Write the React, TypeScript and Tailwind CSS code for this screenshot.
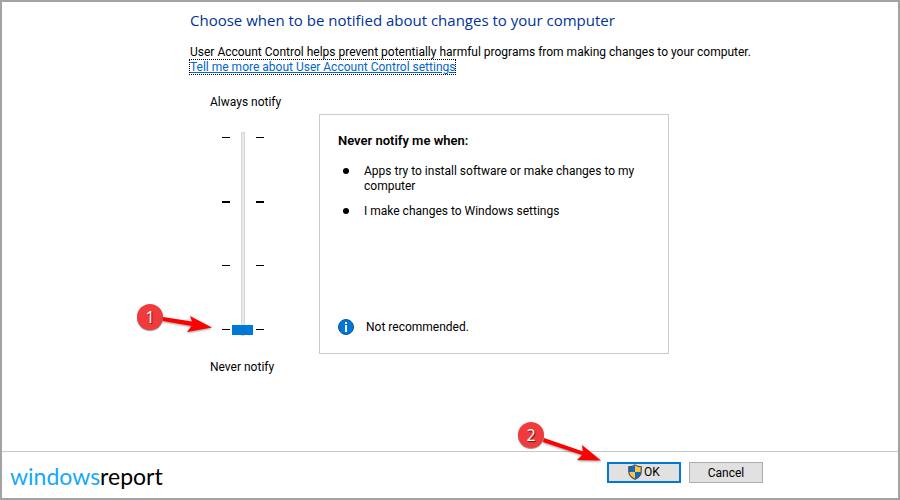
const ticks = [
  { id: "always", thick: false },
  { id: "default", thick: true },
  { id: "no-dim", thick: false },
  { id: "never", thick: false },
];

function TickColumn() {
  return (
    <div className="flex h-[193px] w-2 flex-col justify-between" aria-hidden="true">
      {ticks.map((tick) => (
        <span key={tick.id} className={tick.thick ? "h-0.5 bg-black" : "h-px bg-black"} />
      ))}
    </div>
  );
}

function Badge({ label }: { label: string }) {
  return (
    <span className="flex h-[26px] w-[26px] items-center justify-center rounded-full bg-[#f13a3c] font-['Open_Sans',sans-serif] text-base text-white shadow-[0_1px_1px_rgba(0,0,0,0.45)] [text-shadow:1px_1px_1px_rgba(0,0,0,0.6)]">
      {label}
    </span>
  );
}

function ShieldIcon() {
  return (
    <svg width="14" height="16" viewBox="0 0 14 16" aria-hidden="true">
      <clipPath id="shield">
        <path d="M7 1.2C5.4 2.5 3.2 3 1 3V7.5C1 11 3.2 13.3 7 15C10.8 13.3 13 11 13 7.5V3C10.8 3 8.6 2.5 7 1.2Z" />
      </clipPath>
      <g clipPath="url(#shield)">
        <rect width="7" height="8" fill="#0a6bc9" />
        <rect x="7" width="7" height="8" fill="#ffc33c" />
        <rect y="8" width="7" height="8" fill="#ffc33c" />
        <rect x="7" y="8" width="7" height="8" fill="#0a6bc9" />
      </g>
      <path
        d="M7 0.9C5.4 2.2 3.2 2.8 0.8 2.8V7.5C0.8 11.2 3.2 13.6 7 15.3C10.8 13.6 13.2 11.2 13.2 7.5V2.8C10.8 2.8 8.6 2.2 7 0.9Z"
        fill="none"
        stroke="#4a4a4a"
        strokeWidth="1.2"
      />
    </svg>
  );
}

function InfoIcon() {
  return (
    <svg width="16" height="16" viewBox="0 0 16 16" aria-hidden="true">
      <circle cx="8" cy="8" r="7.5" fill="#0078d7" stroke="#0b5698" />
      <rect x="7" y="3" width="2" height="2" fill="#fff" />
      <rect x="7" y="6" width="2" height="7" fill="#fff" />
    </svg>
  );
}

export default function App() {
  return (
    <div className="flex min-h-screen flex-col border-2 border-[#a3a3a3] bg-white font-['Roboto','Noto_Sans',sans-serif] text-xs leading-4 text-black">
      <main className="flex-1 pt-1.5 pl-[188px]">
        <h1 className="font-['Open_Sans',sans-serif] text-[15px] leading-6 text-[#003399]">
          Choose when to be notified about changes to your computer
        </h1>
        <p className="mt-3">
          User Account Control helps prevent potentially harmful programs from making changes to your computer.
        </p>
        <a
          href="#settings"
          className="block w-fit leading-[14px] text-[#0066cc] underline outline-1 outline-black outline-dotted"
        >
          Tell me more about User Account Control settings
        </a>

        <div className="mt-5 flex items-start">
          <div className="relative w-[129px] shrink-0 pl-5">
            <label htmlFor="notify-level" className="block">Always notify</label>
            <div className="mt-[22px] flex h-[204px] pl-3">
              <div className="pt-[5px]">
                <TickColumn />
              </div>
              <input
                id="notify-level"
                type="range"
                min={0}
                max={3}
                defaultValue={0}
                className="mr-[3px] ml-0.5 h-[204px] w-[21px] appearance-none bg-transparent [direction:rtl] [writing-mode:vertical-lr] [&::-webkit-slider-runnable-track]:h-full [&::-webkit-slider-runnable-track]:w-1 [&::-webkit-slider-runnable-track]:border [&::-webkit-slider-runnable-track]:border-[#d6d6d6] [&::-webkit-slider-runnable-track]:bg-[#e7eaea] [&::-webkit-slider-thumb]:-ml-[10px] [&::-webkit-slider-thumb]:h-2.5 [&::-webkit-slider-thumb]:w-[21px] [&::-webkit-slider-thumb]:appearance-none [&::-webkit-slider-thumb]:bg-[#0078d7]"
              />
              <div className="pt-[5px]">
                <TickColumn />
              </div>
            </div>
            <p className="mt-[23px]">Never notify</p>

            <div className="absolute top-[210px] -left-[53px]">
              <Badge label="1" />
              <svg className="absolute top-0 left-6 drop-shadow-[0_1px_1px_rgba(0,0,0,0.4)]" width="54" height="30" aria-hidden="true">
                <path d="M2 13L31 17.5L29 12L51 23.5L26 28L30.5 22L2 17Z" fill="#f00" />
              </svg>
            </div>
          </div>

          <section className="mt-5 flex min-h-[240px] w-[350px] flex-col border border-[#cccccc] px-[18px] pt-[18px] pb-[18px]">
            <h2 className="text-[13px] leading-4 font-semibold">Never notify me when:</h2>
            <ul className="mt-[15px] space-y-2.5 leading-[15px]">
              <li className="flex gap-[15px]">
                <span className="mt-1 ml-[5px] h-1.5 w-1.5 shrink-0 rounded-full bg-black" />
                Apps try to install software or make changes to my computer
              </li>
              <li className="flex gap-[15px]">
                <span className="mt-1 ml-[5px] h-1.5 w-1.5 shrink-0 rounded-full bg-black" />
                I make changes to Windows settings
              </li>
            </ul>
            <p className="mt-auto flex items-center gap-3">
              <InfoIcon />
              Not recommended.
            </p>
          </section>
        </div>
      </main>

      <footer className="flex h-[47px] items-center justify-between border-t border-[#c8c8c8] pr-[135px] pl-2">
        <div className="pt-0.5 font-['Lato'] text-[23px] leading-8">
          <span className="text-[#14a9fb]">windows</span>
          <span>report</span>
        </div>
        <div className="relative flex gap-2 pb-1.5">
          <button
            type="button"
            className="flex h-[21px] w-[74px] items-center justify-center gap-0.5 border-2 border-[#0078d7] bg-[#e1e1e1]"
          >
            <ShieldIcon />
            OK
          </button>
          <button type="button" className="h-[21px] w-[74px] border border-[#adadad] bg-[#e1e1e1] pt-px">
            Cancel
          </button>
          <div className="absolute -top-[40px] -left-[89px]">
            <Badge label="2" />
            <svg className="absolute top-0 left-6 drop-shadow-[0_1px_1px_rgba(0,0,0,0.4)]" width="62" height="42" aria-hidden="true">
              <path d="M2 16L41 29.5L40 23L59 38.5L35 38L40 33L1 20Z" fill="#f00" />
            </svg>
          </div>
        </div>
      </footer>
    </div>
  );
}
